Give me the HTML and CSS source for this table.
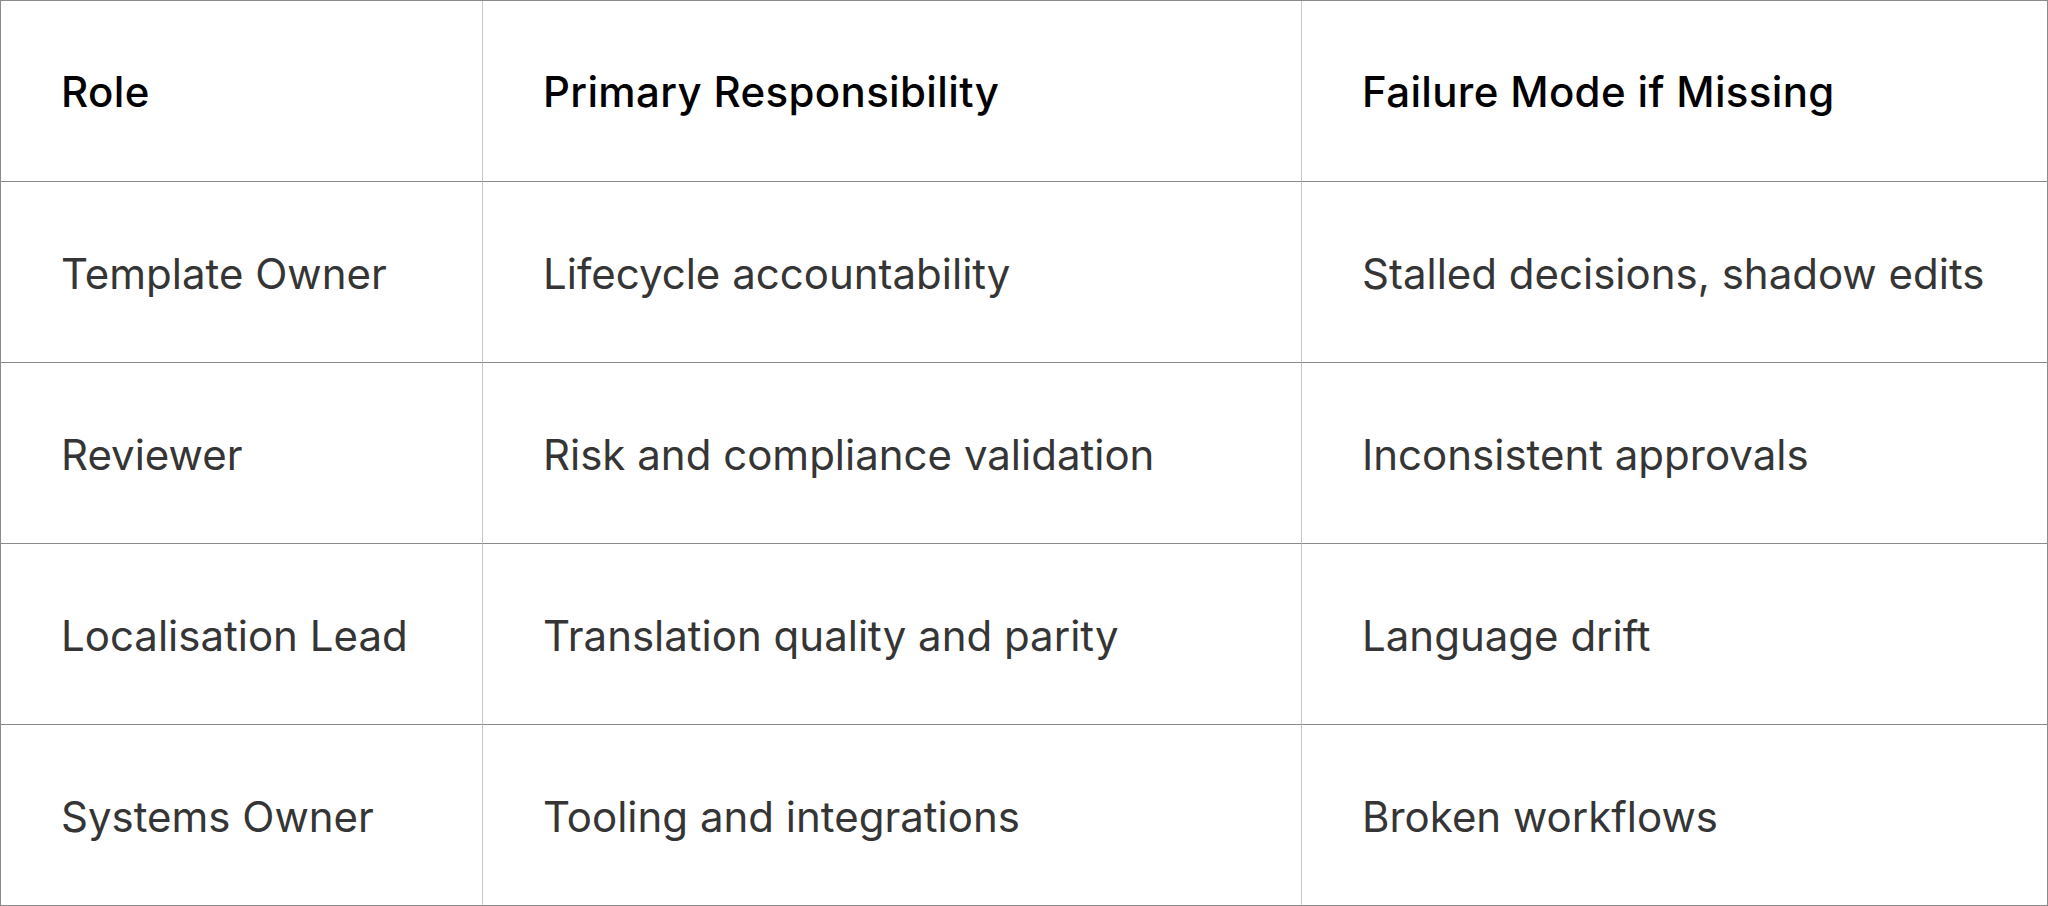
FILE: index.html
```html
<!DOCTYPE html>
<html lang="en">
<head>
<meta charset="utf-8">
<title>Roles</title>
<link rel="stylesheet" href="styles.css">
</head>
<body>
<div class="table">
  <div class="cell head">Role</div>
  <div class="cell head">Primary Responsibility</div>
  <div class="cell head last">Failure Mode if Missing</div>

  <div class="cell">Template Owner</div>
  <div class="cell">Lifecycle accountability</div>
  <div class="cell last">Stalled decisions, shadow edits</div>

  <div class="cell">Reviewer</div>
  <div class="cell">Risk and compliance validation</div>
  <div class="cell last">Inconsistent approvals</div>

  <div class="cell">Localisation Lead</div>
  <div class="cell">Translation quality and parity</div>
  <div class="cell last">Language drift</div>

  <div class="cell">Systems Owner</div>
  <div class="cell">Tooling and integrations</div>
  <div class="cell last">Broken workflows</div>
</div>
</body>
</html>
```

FILE: styles.css
```css
html, body {
  margin: 0;
  padding: 0;
  background: #ffffff;
}

.table {
  display: grid;
  grid-template-columns: 482px 819px 1fr;
  grid-template-rows: repeat(5, 181px);
  width: 2048px;
  box-sizing: border-box;
  border-top: 1px solid #8a8a8a;
  border-left: 1px solid #8a8a8a;
  font-family: "Inter", "Liberation Sans", sans-serif;
}

.cell {
  box-sizing: border-box;
  display: flex;
  align-items: center;
  padding-left: 60px;
  padding-top: 3px;
  border-right: 1px solid #c8c8c8;
  border-bottom: 1px solid #8a8a8a;
  font-size: 42px;
  font-weight: 400;
  color: #353535;
  white-space: nowrap;
}

.cell.last {
  border-right-color: #8a8a8a;
}

.cell.head {
  font-weight: 500;
  color: #000000;
  padding-top: 1px;
  letter-spacing: 0.35px;
}
```
